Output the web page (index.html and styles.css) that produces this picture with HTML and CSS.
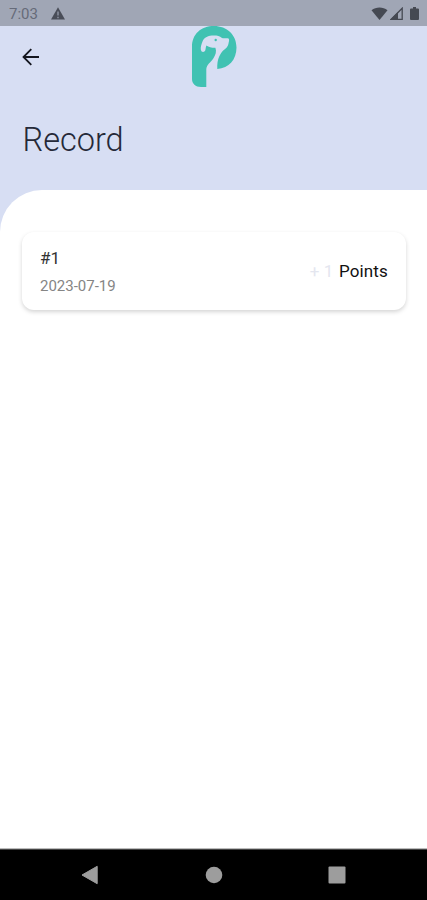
FILE: index.html
```html
<!DOCTYPE html>
<html lang="en">
<head>
<meta charset="UTF-8">
<meta name="viewport" content="width=device-width, initial-scale=1.0">
<title>Record</title>
<link rel="stylesheet" href="styles.css">
</head>
<body>
  <div class="screen">
    <div class="status-bar">
      <span class="time">7:03</span>
      <svg class="warning" width="14" height="13" viewBox="0 0 14 13">
        <path d="M7 0.2L14 12.5H0Z" fill="#494d58"/>
        <path d="M7 4.5V8.5M7 9.7V11.2" stroke="#8a909e" stroke-width="1.5"/>
      </svg>
      <div class="status-icons">
        <svg width="17" height="13" viewBox="0 0 17 13">
          <path d="M0.5 3.3C5 -0.5 12 -0.5 16.5 3.3L8.5 13Z" fill="#454952"/>
        </svg>
        <svg width="13" height="13" viewBox="0 0 13 13">
          <path d="M12.2 1.2V12.3H1.2Z" fill="none" stroke="#454952" stroke-width="1.3"/>
          <path d="M8 5V13H0Z" fill="#454952"/>
        </svg>
        <svg class="battery" width="9" height="13" viewBox="0 0 9 13">
          <path d="M3 0H6V1.5H8Q9 1.5 9 2.5V12Q9 13 8 13H1Q0 13 0 12V2.5Q0 1.5 1 1.5H3Z" fill="#454952"/>
        </svg>
      </div>
    </div>

    <div class="header">
      <div class="nav">
        <svg class="back" width="18" height="18" viewBox="0 0 18 18">
          <path d="M17 9H1.5M9.3 1.2L1.5 9L9.3 16.8" fill="none" stroke="#14161f" stroke-width="1.8"/>
        </svg>
        <svg class="logo" width="45" height="61" viewBox="0 0 45 61">
          <path fill="#40c2b2" d="M0 53V21C0 8 9 0 22 0C35 0 44.5 9 44.5 21.5C44.5 33.5 37 42.3 25.3 43C25.1 38 25.6 34 27.2 30.5C28.5 28 29.5 26.3 31.2 24.6C34 22.4 36 20.5 36.4 18C36.6 16 37.8 14 36.6 12.5C34.5 11.7 32 12.6 30 12C27.5 10.2 25.5 9.6 22 9.6C16 9.6 12.2 11.5 10.5 15.5C9.5 18 8.5 21 8.8 23.5C9.2 26 11 26.4 12.4 25.6C14 24.3 13.4 21.5 14.4 19.5C17 21 20 22 23.4 21.8C24.8 25.5 23.6 29 21.3 32.5C18.5 36.5 14.8 38.5 14.3 43V61H9C3.5 61 0 57.5 0 53Z"/>
          <circle cx="23.7" cy="14" r="1.2" fill="#40c2b2"/>
        </svg>
      </div>
      <h1 class="title">Record</h1>
    </div>

    <div class="content">
      <div class="card">
        <div class="record">
          <div class="record-id">#1</div>
          <div class="record-date">2023-07-19</div>
        </div>
        <div class="points"><span class="amount">+ 1</span> Points</div>
      </div>
    </div>

    <div class="nav-bar">
      <svg width="18" height="20" viewBox="0 0 18 20">
        <path d="M1 10L16.2 1.3V18.7Z" fill="#9d9d9d" stroke="#9d9d9d" stroke-linejoin="round"/>
      </svg>
      <svg width="18" height="18" viewBox="0 0 18 18">
        <circle cx="9" cy="9" r="8.3" fill="#9d9d9d"/>
      </svg>
      <svg width="18" height="18" viewBox="0 0 18 18">
        <rect x="0.5" y="0.5" width="17" height="17" rx="1" fill="#9d9d9d"/>
      </svg>
    </div>
  </div>
</body>
</html>
```

FILE: styles.css
```css
body {
  margin: 0;
  font-family: Roboto, sans-serif;
}

.screen {
  display: flex;
  flex-direction: column;
  height: 900px;
  background-color: #d7def3;
  overflow: hidden;
}

.status-bar {
  display: flex;
  align-items: center;
  box-sizing: border-box;
  height: 26px;
  padding: 1px 8px 0 9px;
  background-color: #a0a6b5;
}

.time {
  width: 42px;
  font-size: 15px;
  color: #666b79;
}

.status-icons {
  display: flex;
  gap: 2px;
  margin-left: auto;
}

.battery {
  margin-left: 5px;
}

.header {
  height: 164px;
}

.nav {
  display: grid;
  grid-template-columns: 192px 45px 1fr;
  align-items: center;
  height: 61px;
}

.back {
  margin-left: 22px;
}

.title {
  margin: 33px 0 0 22.5px;
  font-size: 32.5px;
  line-height: 40px;
  font-weight: 300;
  color: #252938;
}

.content {
  flex: 1;
  padding: 42px 21px 0 22px;
  background-color: #fff;
  border-top-left-radius: 42px;
}

.card {
  display: flex;
  justify-content: space-between;
  align-items: center;
  box-sizing: border-box;
  height: 78px;
  padding: 0 18px;
  border-radius: 12px;
  background-color: #fff;
  box-shadow: 0 2px 4px rgba(0, 0, 0, 0.17);
}

.record {
  padding-top: 2px;
}

.record-id {
  font-size: 17px;
  line-height: 23px;
  color: #333;
}

.record-date {
  margin-top: 5px;
  font-size: 15px;
  line-height: 23px;
  color: #858585;
}

.points {
  padding-bottom: 1px;
  font-size: 17px;
  letter-spacing: 0.15px;
  color: #111;
}

.amount {
  margin-right: 1px;
  color: #e4e6ef;
}

.nav-bar {
  display: flex;
  justify-content: space-between;
  align-items: center;
  box-sizing: border-box;
  height: 52px;
  padding: 0 81px;
  border-top: 1px solid #bbb;
  box-shadow: inset 0 1px 0 #444;
  background-color: #000;
}
```
